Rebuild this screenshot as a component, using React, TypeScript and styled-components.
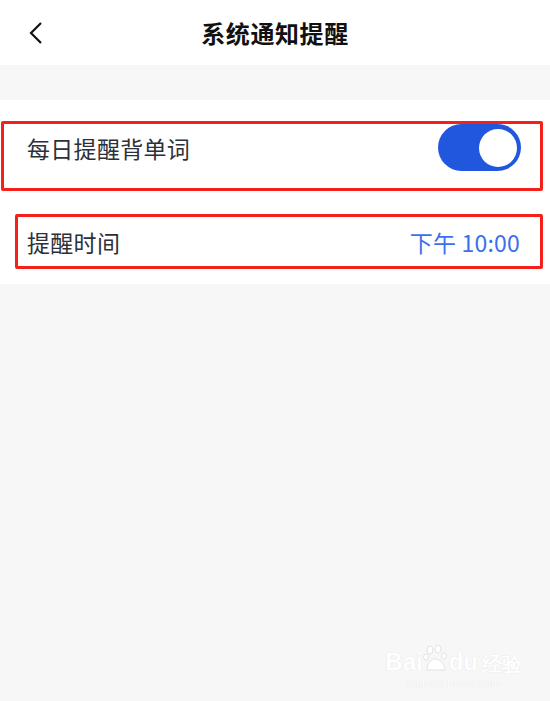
import React, { useState } from 'react'
import styled, { createGlobalStyle } from 'styled-components'

const GlobalStyle = createGlobalStyle`
  html, body {
    margin: 0;
    padding: 0;
    background: #f7f7f7;
    font-family: "Noto Sans CJK SC", "Noto Sans", sans-serif;
  }
  #root {
    min-height: 100vh;
  }
`

const Page = styled.div`
  position: relative;
  min-height: 100vh;
  background: #f7f7f7;
  overflow: hidden;
`

const Header = styled.div`
  height: 65px;
  background: #fff;
  display: flex;
  align-items: center;
  justify-content: center;
  position: relative;
`

const BackButton = styled.button`
  position: absolute;
  left: 22px;
  top: 18px;
  width: 28px;
  height: 30px;
  border: none;
  background: none;
  padding: 0;
  display: flex;
  align-items: center;
  justify-content: center;
`

const Title = styled.h1`
  margin: 0;
  font-size: 24px;
  font-weight: 700;
  color: #111;
  letter-spacing: 0.6px;
`

const Spacer = styled.div`
  height: 35px;
`

const Section = styled.div`
  background: #fff;
  padding: 21px 7px 15px 1px;
  display: flex;
  flex-direction: column;
  gap: 23px;
`

const Marked = styled.div<{ $inset: number }>`
  border: 3px solid #f5201a;
  border-radius: 2px;
  margin-left: ${p => p.$inset}px;
`

const SwitchRow = styled.div`
  height: 47px;
  padding: 0 19px 17px 23px;
  display: flex;
  align-items: center;
  justify-content: space-between;
`

const TimeRow = styled.div`
  height: 49px;
  padding: 0 18px 0 9px;
  margin-right: 2px;
  display: flex;
  align-items: center;
  justify-content: space-between;
`

const Label = styled.span`
  font-size: 23px;
  color: #2c3038;
  letter-spacing: 0.3px;
`

const Value = styled.span`
  font-size: 23px;
  color: #3a6ff0;
  font-family: "Noto Sans CJK SC", Roboto, sans-serif;
  letter-spacing: 0.2px;
`

const Toggle = styled.button<{ $on: boolean }>`
  width: 83px;
  height: 47px;
  border-radius: 24px;
  border: none;
  padding: 0 4px;
  background: ${p => (p.$on ? '#2157dd' : '#d5d7dc')};
  display: flex;
  align-items: center;
  justify-content: ${p => (p.$on ? 'flex-end' : 'flex-start')};
  cursor: pointer;
`

const Knob = styled.span`
  width: 38px;
  height: 38px;
  border-radius: 50%;
  background: #fff;
`

const Watermark = styled.div`
  position: absolute;
  right: 28px;
  bottom: 12px;
  display: flex;
  flex-direction: column;
  align-items: center;
  color: #fff;
  text-shadow: 0 0 1px #d8d8d8;
  font-family: "Liberation Sans", Arial, sans-serif;
  pointer-events: none;
`

const MarkLogo = styled.div`
  display: flex;
  align-items: flex-end;
  font-size: 24px;
  font-weight: 700;
  line-height: 1;
`

const MarkUrl = styled.div`
  font-size: 11px;
  margin-top: 3px;
  letter-spacing: 0.3px;
`

export default function App() {
  const [on, setOn] = useState(true)
  return (
    <Page>
      <GlobalStyle />
      <Header>
        <BackButton aria-label="返回">
          <svg width="16" height="24" viewBox="0 0 16 24">
            <path d="M13 2 L3 12 L13 22" fill="none" stroke="#111" strokeWidth="2.2" />
          </svg>
        </BackButton>
        <Title>系统通知提醒</Title>
      </Header>
      <Spacer />
      <Section>
        <Marked $inset={0}>
          <SwitchRow>
            <Label>每日提醒背单词</Label>
            <Toggle $on={on} onClick={() => setOn(!on)}>
              <Knob />
            </Toggle>
          </SwitchRow>
        </Marked>
        <Marked $inset={14}>
          <TimeRow>
            <Label>提醒时间</Label>
            <Value>下午 10:00</Value>
          </TimeRow>
        </Marked>
      </Section>
      <Watermark>
        <MarkLogo>
          Bai
          <svg width="26" height="30" viewBox="0 0 26 30">
            <g fill="#fff" stroke="#dcdcdc" strokeWidth="0.8">
              <ellipse cx="7" cy="6" rx="3" ry="4" />
              <ellipse cx="15" cy="5" rx="3" ry="4" />
              <ellipse cx="3" cy="13" rx="2.5" ry="3" />
              <ellipse cx="21" cy="12" rx="2.5" ry="3" />
              <path d="M4 26 C4 18 9 15 12 15 C16 15 22 19 22 26 Z" />
            </g>
          </svg>
          du
          <span style={{ fontSize: 20, marginLeft: 4 }}>经验</span>
        </MarkLogo>
        <MarkUrl>jingyan.baidu.com</MarkUrl>
      </Watermark>
    </Page>
  )
}
